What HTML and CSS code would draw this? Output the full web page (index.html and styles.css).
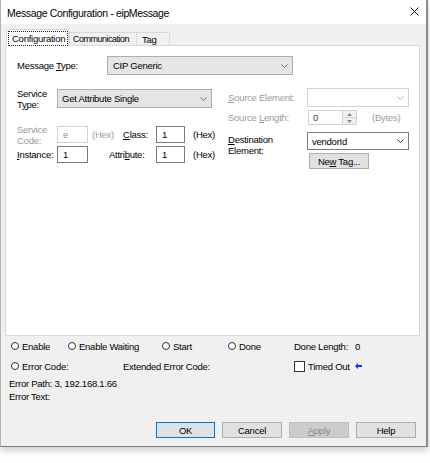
FILE: index.html
```html
<!DOCTYPE html>
<html>
<head>
<meta charset="utf-8">
<link rel="stylesheet" href="styles.css">
</head>
<body>
<div class="window">
  <div class="titlebar">
    <span class="title">Message Configuration - eipMessage</span>
    <svg class="close" width="9" height="9" viewBox="0 0 9 9"><path d="M0.5 0.5L8.5 8.5M8.5 0.5L0.5 8.5" stroke="#111" stroke-width="1"/></svg>
  </div>
  <div class="body">
    <div class="tabs">
      <div class="tab active"><span class="focus">Configuration</span></div>
      <div class="tab comm"><span>Communication</span></div>
      <div class="tab tag"><span>Tag</span></div>
    </div>
    <div class="panel">
      <div class="row r-msgtype">
        <span class="lbl w90">Message <u>T</u>ype:</span>
        <div class="combo ro w186"><span>CIP Generic</span><svg class="chev" width="7" height="4" viewBox="0 0 7 4"><path d="M0.5 0.5L3.5 3.5L6.5 0.5" fill="none" stroke="#707070"/></svg></div>
      </div>
      <div class="cols">
        <div class="col left">
          <div class="row r-svc">
            <span class="lbl2 w40">Service<br>T<u>y</u>pe:</span>
            <div class="combo ro w155"><span>Get Attribute Single</span><svg class="chev" width="7" height="4" viewBox="0 0 7 4"><path d="M0.5 0.5L3.5 3.5L6.5 0.5" fill="none" stroke="#707070"/></svg></div>
          </div>
          <div class="row r-code">
            <span class="lbl2 dis w40">Service<br>Code:</span>
            <div class="input dis w31"><span>e</span></div>
            <span class="hex dis">(Hex)</span>
            <span class="lbl w33"><u>C</u>lass:</span>
            <div class="input w29"><span>1</span></div>
            <span class="hex2">(Hex)</span>
          </div>
          <div class="row r-inst">
            <span class="lbl w40"><u>I</u>nstance:</span>
            <div class="input w31"><span>1</span></div>
            <span class="lbl attr">Attri<u>b</u>ute:</span>
            <div class="input w29"><span>1</span></div>
            <span class="hex2">(Hex)</span>
          </div>
        </div>
        <div class="col right">
          <div class="row r-src">
            <span class="lbl dis w79"><u>S</u>ource Element:</span>
            <div class="combo dis w102"><span></span><svg class="chev" width="7" height="4" viewBox="0 0 7 4"><path d="M0.5 0.5L3.5 3.5L6.5 0.5" fill="none" stroke="#b5b5b5"/></svg></div>
          </div>
          <div class="row r-len">
            <span class="lbl dis w80">Source <u>L</u>ength:</span>
            <div class="spin">
              <span class="spin-val">0</span>
              <div class="spin-btns">
                <div class="sb"><svg width="5" height="3" viewBox="0 0 5 3"><path d="M0 3L2.5 0L5 3Z" fill="#8a8a8a"/></svg></div>
                <div class="sb"><svg width="5" height="3" viewBox="0 0 5 3"><path d="M0 0L2.5 3L5 0Z" fill="#8a8a8a"/></svg></div>
              </div>
            </div>
            <span class="lbl dis bytes">(Bytes)</span>
          </div>
          <div class="row r-dest">
            <span class="lbl2 w79 dest"><u>D</u>estination<br>Element:</span>
            <div class="combo edit w102"><span>vendorId</span><svg class="chev" width="7" height="4" viewBox="0 0 7 4"><path d="M0.5 0.5L3.5 3.5L6.5 0.5" fill="none" stroke="#333"/></svg></div>
          </div>
          <div class="newtag"><span>Ne<u>w</u> Tag...</span></div>
        </div>
      </div>
    </div>
    <div class="status">
      <div class="srow s1">
        <div class="item i-enable"><span class="radio"></span><span>Enable</span></div>
        <div class="item i-wait"><span class="radio"></span><span>Enable Waiting</span></div>
        <div class="item i-start"><span class="radio"></span><span>Start</span></div>
        <div class="item i-done"><span class="radio"></span><span>Done</span></div>
        <div class="item"><span>Done Length:</span><span class="zero">0</span></div>
      </div>
      <div class="srow s2">
        <div class="item i-err"><span class="radio"></span><span>Error Code:</span></div>
        <div class="item i-ext"><span>Extended Error Code:</span></div>
        <div class="item"><span class="check"></span><span>Timed Out</span><svg class="arrow" width="7" height="6" viewBox="0 0 7 6"><path d="M0 3L3 0V2H7V4H3V6Z" fill="#1133ee"/></svg></div>
      </div>
      <div class="line l1">Error Path: 3, 192.168.1.66</div>
      <div class="line">Error Text:</div>
    </div>
    <div class="btns">
      <div class="btn ok"><span>OK</span></div>
      <div class="btn"><span>Cancel</span></div>
      <div class="btn dis"><span><u>A</u>pply</span></div>
      <div class="btn"><span>Help</span></div>
    </div>
  </div>
</div>
</body>
</html>
```

FILE: styles.css
```css
* { box-sizing: border-box; }
html, body { margin: 0; padding: 0; background: #fff; }
body {
  width: 430px;
  height: 463px;
  overflow: hidden;
  font-family: "Liberation Sans", Arial, sans-serif;
  font-size: 9.5px;
  letter-spacing: -0.25px;
  color: #000;
}
u { text-decoration: underline; text-underline-offset: 1px; }

.window {
  width: 428px;
  height: 447px;
  background: #f0f0f0;
  border-left: 1px solid #b4b4b4;
  border-right: 2px solid #8c8c8c;
  border-bottom: 1px solid #7a7a7a;
  box-shadow: 0 3px 8px rgba(0, 0, 0, 0.22);
}

.titlebar {
  height: 24px;
  background: #fff;
  display: flex;
  align-items: center;
  justify-content: space-between;
  padding: 0 7px 0 6px;
}
.title { font-size: 10.5px; letter-spacing: -0.35px; padding-top: 1px; }
.close { margin-top: -2px; }

.body { padding: 0 6px 0 4px; }

.tabs {
  margin-top: 5px;
  height: 16px;
  display: flex;
  align-items: flex-end;
  position: relative;
  z-index: 1;
}
.tab {
  height: 13px;
  border: 1px solid #d9d9d9;
  border-bottom: none;
  background: #f0f0f0;
  display: flex;
  align-items: center;
  padding-left: 3px;
  white-space: nowrap;
  overflow: hidden;
}
.tab.active {
  margin-left: 1px;
  width: 63px;
  height: 17px;
  margin-bottom: -1px;
  background: #fff;
  padding-left: 2px;
  overflow: visible;
}
.focus {
  outline: 1px dotted #222;
  padding: 1px 2px 1px 3px;
  line-height: 11px;
}
.tab.comm { width: 68px; font-size: 9px; letter-spacing: -0.5px; }
.tab.tag { width: 33px; border-left: none; padding-left: 5px; }

.panel {
  width: 415px;
  height: 291px;
  background: #fff;
  border: 1px solid #d9d9d9;
  padding: 10px 0 0 11px;
}

.row { display: flex; align-items: center; }
.lbl { white-space: nowrap; }
.lbl2 { line-height: 11px; white-space: nowrap; }
.dis { color: #9b9b9b; }
.w90 { width: 90px; }
.w40 { width: 40px; }
.w33 { width: 33px; }
.w79 { width: 79px; }
.w80 { width: 80px; }

.r-msgtype { height: 19px; }

.combo {
  height: 19px;
  display: flex;
  align-items: center;
  justify-content: space-between;
  padding: 0 4px 0 5px;
  border: 1px solid #adadad;
  white-space: nowrap;
}
.combo.ro { background: #e5e5e5; }
.combo.dis { background: #fff; border-color: #d3d3d3; }
.combo.edit { background: #fff; border-color: #7a7a7a; height: 18px; padding-left: 4px; }
.w186 { width: 186px; }
.w155 { width: 155px; padding-left: 4px; }
.w102 { width: 102px; }

.cols { display: flex; align-items: flex-start; margin-top: 13px; }
.col.left { width: 211px; padding-top: 1px; }
.col.right { width: 182px; }

.r-svc { height: 19px; }
.r-code { height: 17px; margin-top: 18px; }
.r-inst { height: 17px; margin-top: 3px; }

.input {
  height: 17px;
  border: 1px solid #7a7a7a;
  background: #fff;
  display: flex;
  align-items: center;
  padding-left: 5px;
}
.input.dis { border-color: #d3d3d3; color: #8a8a8a; }
.w31 { width: 31px; }
.w29 { width: 29px; }
.hex { width: 35px; padding-left: 4px; }
.hex2 { padding-left: 8px; }
.attr { width: 68px; padding-left: 21px; }

.r-src { height: 19px; }
.r-len { height: 15px; margin-top: 3px; }
.spin {
  width: 49px;
  height: 15px;
  border: 1px solid #d3d3d3;
  background: #fff;
  display: flex;
  justify-content: space-between;
}
.spin-val { padding-left: 4px; line-height: 14px; color: #444; }
.spin-btns { width: 14px; display: flex; flex-direction: column; }
.sb {
  flex: 1;
  background: #f0f0f0;
  border-left: 1px solid #d3d3d3;
  display: flex;
  align-items: center;
  justify-content: center;
}
.sb + .sb { border-top: 1px solid #d3d3d3; }
.bytes { padding-left: 15px; }
.r-dest { height: 18px; margin-top: 7px; align-items: flex-start; }
.dest { padding-top: 2px; }
.newtag {
  margin: 3px 0 0 81px;
  width: 60px;
  height: 16px;
  background: #e1e1e1;
  border: 1px solid #adadad;
  display: flex;
  align-items: center;
  justify-content: center;
}

.status { padding-left: 6px; }
.srow { display: flex; align-items: center; height: 16px; }
.s1 { margin-top: 2px; }
.s2 { margin-top: 4px; }
.item { display: flex; align-items: center; white-space: nowrap; }
.i-enable { width: 57px; }
.i-wait { width: 94px; }
.i-start { width: 66px; }
.i-done { width: 66px; }
.i-err { width: 112px; }
.i-ext { width: 171px; }
.radio {
  width: 8px;
  height: 8px;
  border: 1px solid #333;
  border-radius: 50%;
  background: #fff;
  margin-right: 3px;
}
.zero { margin-left: 7px; }
.check {
  width: 11px;
  height: 11px;
  border: 1px solid #333;
  background: #fff;
  margin-right: 3px;
}
.arrow { margin-left: 5px; }
.line { height: 13px; line-height: 13px; margin-left: -2px; }
.l1 { margin-top: 3px; }

.btns {
  display: flex;
  justify-content: flex-end;
  gap: 7px;
  margin-top: 19px;
  padding-right: 4px;
}
.btn {
  width: 60px;
  height: 16px;
  background: #e1e1e1;
  border: 1px solid #adadad;
  display: flex;
  align-items: center;
  justify-content: center;
}
.btn.ok { width: 59px; border-color: #0078d7; }
.btn.dis { background: #cccccc; border-color: #bfbfbf; color: #8a8a8a; }
```
